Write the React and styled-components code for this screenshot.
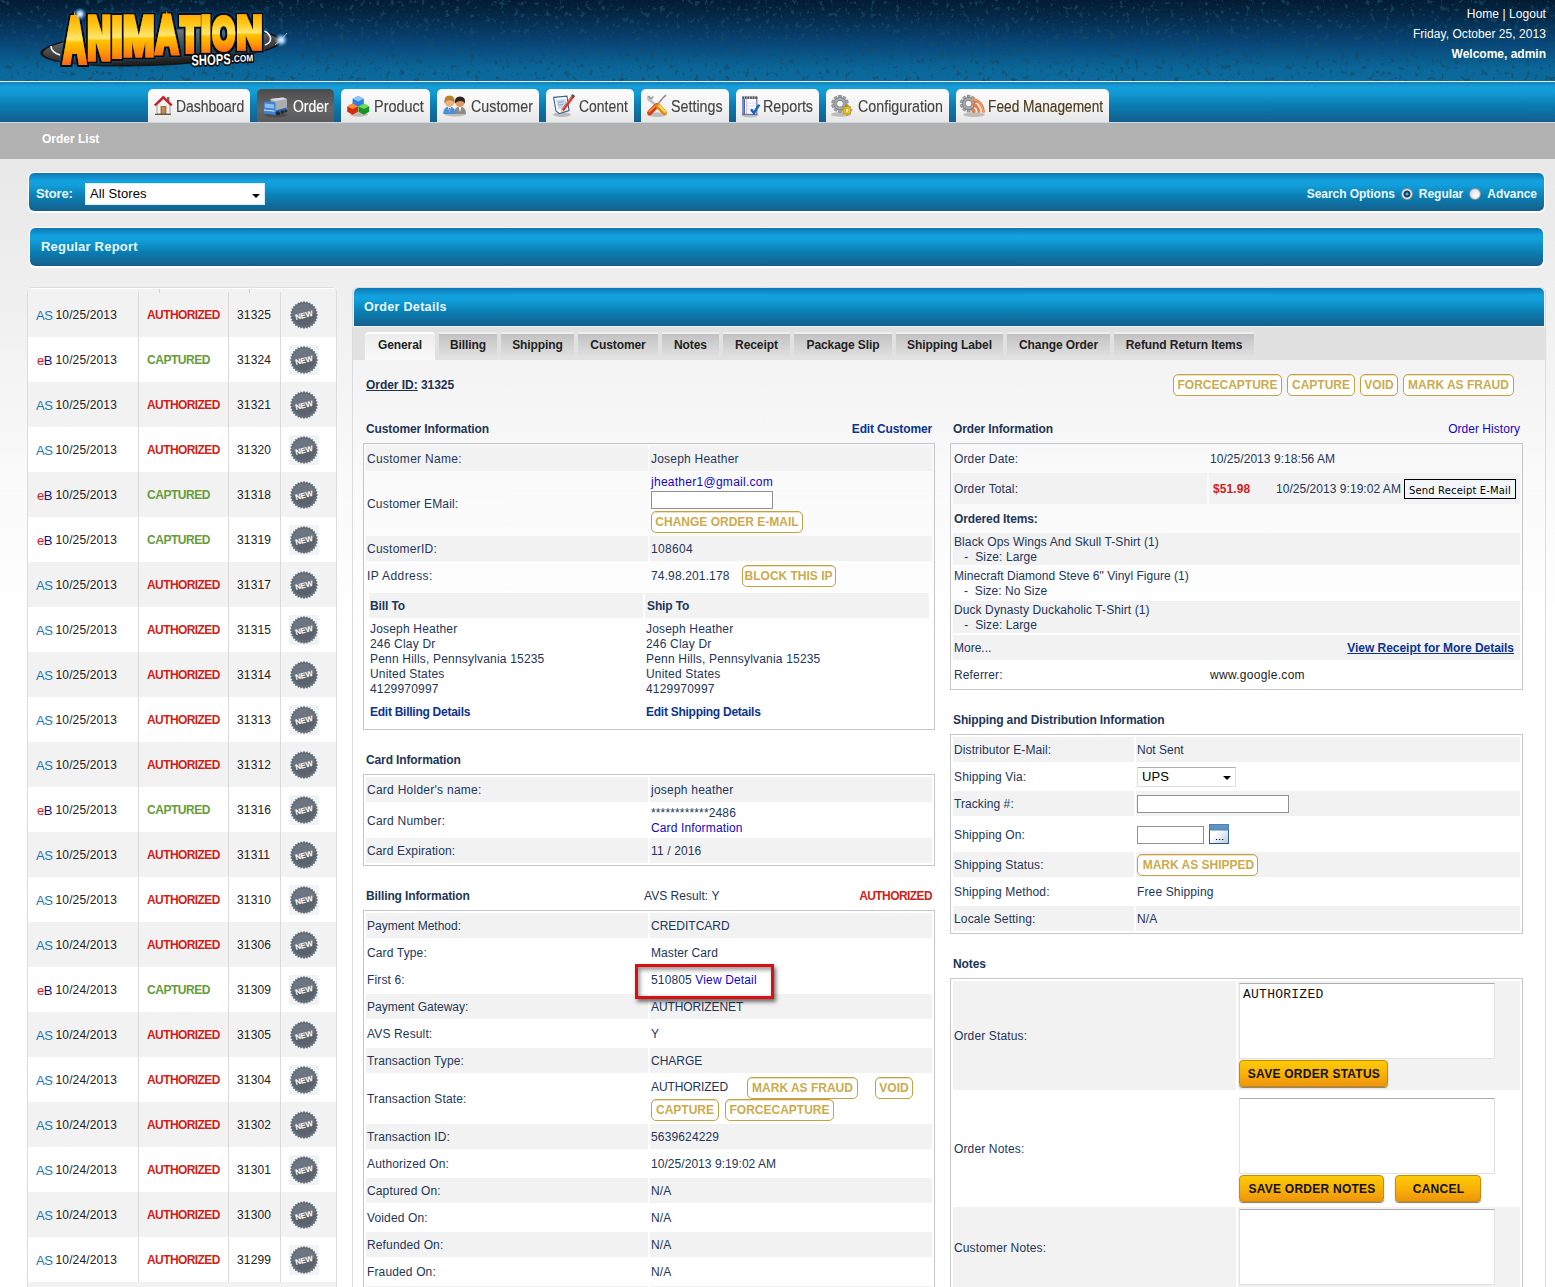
import React from "react";
import styled, { createGlobalStyle } from "styled-components";

const sans = `"Liberation Sans", Arial, Helvetica, sans-serif`;
const blueBar = `linear-gradient(#0d77b3 0%, #13a1de 20%, #12a0dc 30%, #0a7fb3 62%, #155f8c 100%)`;

const GlobalStyle = createGlobalStyle`
  body { margin: 0; background: #fff; }
  * { box-sizing: border-box; }
  b { letter-spacing: -0.12px; }
`;

const Page = styled.div`
  width: 1555px;
  height: 1287px;
  overflow: hidden;
  font: 12px/15px ${sans};
  letter-spacing: 0.14px;
  color: #22355a;
  background: linear-gradient(#e8e8e8 159px, #efefef 290px, #fafafa 480px, #fff 640px);
`;

/* ---------- header ---------- */
const Header = styled.header`
  position: relative;
  height: 81px;
  display: flex;
  justify-content: space-between;
  background: linear-gradient(#031b31 0%, #052a4a 22%, #08487a 55%, #0a6799 85%, #0b6b9e 100%);
`;
const Grunge = styled.svg`
  position: absolute;
  inset: 0;
`;
const LogoBox = styled.div`
  position: relative;
  padding-left: 36px;
  svg { display: block; }
`;
const UserInfo = styled.div`
  position: relative;
  padding: 4px 9px 0 0;
  text-align: right;
  line-height: 20px;
  letter-spacing: 0.05px;
  color: #fff;
  b { letter-spacing: 0; }
`;

const NavBar = styled.nav`
  height: 42px;
  border-top: 1px solid #e3f0f7;
  border-bottom: 1px solid #c9d8e0;
  padding: 7px 0 0 148px;
  display: flex;
  gap: 7px;
  background: linear-gradient(#1a7fb4 0, #149fda 5px, #129ad4 11px, #0a7bb0 24px, #135f8c 40px);
`;
const Tab = styled.a`
  width: ${(p) => p.$w}px;
  height: 33px;
  padding-left: ${(p) => p.$pad}px;
  display: flex;
  align-items: center;
  border-radius: 5px 5px 0 0;
  color: ${(p) => (p.$active ? "#fff" : p.$brown ? "#4a3a1c" : "#444")};
  background: ${(p) => (p.$active ? "linear-gradient(#4b4b4b, #666 60%, #5a5a5a)" : "linear-gradient(#fcfcfc, #f2f2f2 60%, #e6e6e6)")};
`;
const TabIcon = styled.span`
  flex: none;
  width: ${(p) => p.$w}px;
  height: 24px;
  svg { display: block; overflow: visible; }
`;
const TabLabel = styled.span`
  font-size: 17px;
  line-height: 20px;
  letter-spacing: 0;
  white-space: nowrap;
  transform: scaleX(${(p) => p.$scale});
  transform-origin: 0 50%;
  padding-top: 2px;
  -webkit-text-stroke: 0.15px currentColor;
`;

const SubNav = styled.div`
  height: 36px;
  background: #b2b2b2;
  color: #fff;
  font-weight: bold;
  letter-spacing: 0;
  padding: 9px 0 0 42px;
`;

/* ---------- bars ---------- */
const Bar = styled.div`
  height: 40px;
  margin: ${(p) => p.$margin};
  padding: ${(p) => p.$pad};
  border: 1px solid #fff;
  box-shadow: 0 1px 0 #fff;
  border-radius: 6px;
  background: ${blueBar};
  background-clip: padding-box;
  color: #e8f8ff;
  font-weight: bold;
  font-size: ${(p) => p.$size || 12}px;
  letter-spacing: ${(p) => p.$ls || 0}px;
  display: flex;
  align-items: center;
`;
const Spacer = styled.span`
  flex: 1;
`;
const Select = styled.div`
  width: ${(p) => p.$w}px;
  height: ${(p) => p.$h}px;
  border: 1px solid #dcdfe4;
  border-top-color: #abadb3;
  border-color: ${(p) => (p.$plain ? "#d8ecf8" : "")};
  background: #fff;
  color: #000;
  font: 13px/15px ${sans};
  letter-spacing: 0.1px;
  padding: 0 4px 1px 4px;
  display: flex;
  align-items: center;
  justify-content: space-between;
  &::after {
    content: "";
    border: 4px solid transparent;
    border-top-color: #000;
    border-bottom: 0;
    margin-top: 4px;
  }
`;
const StoreLabel = styled.span`
  width: 49px;
  margin-top: -2px;
  font-size: 13px;
  letter-spacing: -0.15px;
`;
const Radio = styled.span`
  width: 12px;
  height: 12px;
  margin: 0 6px 0;
  border-radius: 50%;
  border: 1px solid #8c9299;
  background: ${(p) => (p.$on ? "radial-gradient(circle, #49b2e0 0 1px, #123c5e 2px 3px, #eee 4px)" : "radial-gradient(circle at 60% 60%, #fff, #cfcfcf)")};
`;

/* ---------- main ---------- */
const Main = styled.main`
  display: flex;
  align-items: flex-start;
  padding: 20px 0 0 27px;
`;
const OrderList = styled.div`
  width: 310px;
  height: 1010px;
  border: 1px solid #dcdcdc;
  border-radius: 6px 6px 0 0;
  background: #f2f2f2;
`;
const ListTop = styled.div`
  height: 4px;
  display: flex;
  gap: 89px;
  padding-left: 131px;
  border-radius: 6px 6px 0 0;
  border-top: 1px solid #fff;
  span { width: 1px; height: 4px; background: #cfcfcf; }
`;
const ListRow = styled.div`
  height: 45px;
  display: grid;
  grid-template-columns: 111px 90px 52px 1fr;
  background: ${(p) => (p.$alt ? "#fff" : "#f2f2f2")};
`;
const ListCell = styled.div`
  display: flex;
  align-items: center;
  padding: 2px 0 0 8px;
  color: #222;
  border-right: 1px solid #dadada;
  &:last-child { border-right: 0; padding-top: 0; }
`;
const Source = styled.span`
  width: 19.5px;
  font-size: 13px;
  padding-left: ${(p) => (p.$eb ? 1 : 0)}px;
  letter-spacing: -0.5px;
  color: ${(p) => (p.$eb ? "#140c8c" : "#1b78b5")};
  i { font-style: normal; color: #d8141c; }
`;
const Status = styled.b`
  letter-spacing: ${(p) => (p.$ok ? -0.45 : -0.58)}px;
  color: ${(p) => (p.$ok ? "#669c3c" : "#cf1f18")};
`;

const Panel = styled.section`
  width: 1194px;
  height: 1010px;
  margin-left: 15px;
  border: 1px solid #dcdcdc;
  border-radius: 6px 6px 0 0;
`;
const PanelHead = styled.h2`
  margin: 0 1px 1px;
  height: 38px;
  padding: 0 10px;
  border-radius: 5px 5px 0 0;
  background: ${blueBar};
  color: #e8f8ff;
  font: bold 12.6px/39px ${sans};
  letter-spacing: 0.28px;
`;
const PanelTabs = styled.div`
  height: 33px;
  background: #e1e1e1;
  display: flex;
  gap: 4px;
  padding: 5px 0 0 12px;
`;
const PanelTab = styled.span`
  width: ${(p) => p.$w}px;
  height: ${(p) => (p.$active ? 28 : 25)}px;
  border-top: 2px solid ${(p) => (p.$active ? "#fff" : "#efefef")};
  border-radius: ${(p) => (p.$active ? "4px 4px 0 0" : "0")};
  background: ${(p) => (p.$active ? "linear-gradient(#ececec, #f9f9f9)" : "linear-gradient(#c2c2c2, #e0e0e0)")};
  text-align: center;
  font-weight: bold;
  letter-spacing: -0.08px;
  line-height: 22px;
  color: #222;
  white-space: nowrap;
`;
const Toolbar = styled.div`
  height: 56px;
  display: flex;
  gap: 5px;
  padding: 14px 31px 0 13px;
  b { padding-top: 4px; color: #1d3152; letter-spacing: -0.04px; }
`;
const Columns = styled.div`
  display: flex;
  gap: 15px;
  padding-left: 10px;
`;
const Col = styled.div`
  width: ${(p) => p.$w}px;
`;
const Title = styled.div`
  display: flex;
  justify-content: space-between;
  height: 27px;
  padding: 6px 3px 0;
  margin-top: ${(p) => p.$mt || 0}px;
  letter-spacing: 0.04px;
  color: #1d3557;
`;
const TitleName = styled.b`
  width: 278px;
`;
const Box = styled.div`
  border: 1px solid #c4c7ca;
  padding: 2px;
  display: flex;
  flex-direction: column;
  gap: 2px;
`;
const Row = styled.div`
  display: grid;
  grid-template-columns: ${(p) => p.$cols};
  gap: 2px;
  height: ${(p) => p.$h || 25}px;
`;
const Cell = styled.div`
  position: relative;
  display: flex;
  align-items: ${(p) => (p.$top ? "flex-start" : "center")};
  flex-wrap: ${(p) => (p.$wrap ? "wrap" : "nowrap")};
  align-content: center;
  padding-top: ${(p) => (p.$pt === undefined ? 2 : p.$pt)}px;
  padding-left: ${(p) => (p.$pl === undefined ? 1 : p.$pl)}px;
  letter-spacing: ${(p) => (p.$ls === undefined ? "inherit" : `${p.$ls}px`)};
  white-space: pre;
  background: ${(p) => (p.$shade ? "#f2f2f2" : "transparent")};
`;
const Stack = styled.div`
  display: flex;
  flex-direction: column;
  align-items: flex-start;
  gap: ${(p) => p.$gap || 0}px;
`;
const EmailLine = styled.div`
  height: 15px;
  line-height: 17px;
  letter-spacing: 0.27px;
`;
const Inner = styled.div`
  padding: 3px 3px 0 3px;
  height: 137px;
`;
const Address = styled.div`
  padding: 4px 0 0 1px;
  letter-spacing: 0.19px;
  white-space: pre-line;
`;
const Link = styled.a`
  color: ${(p) => (p.$bold ? "#0b3390" : "#1405c6")};
  font-weight: ${(p) => (p.$bold ? "bold" : "normal")};
  letter-spacing: ${(p) => (p.$bold ? "-0.14px" : "inherit")};
  text-decoration: ${(p) => (p.$line ? "underline" : "none")};
`;
const EditLink = styled(Link)`
  display: block;
  margin-top: 8px;
  letter-spacing: -0.26px;
`;
const ReceiptLink = styled(Link)`
  margin-right: 6px;
  letter-spacing: -0.04px;
`;
const Outline = styled.button`
  flex: none;
  width: ${(p) => p.$w}px;
  height: 22px;
  margin: ${(p) => p.$m || "0"};
  padding: 0;
  border: 1px solid #c4a144;
  border-radius: 5px;
  background: #fff;
  box-shadow: inset 0 1px 0 #ece0bd;
  color: #cbab4d;
  font: bold 12px/20px ${sans};
  letter-spacing: 0;
  text-indent: ${(p) => p.$indent || 0}px;
  white-space: nowrap;
`;
const Gold = styled.button`
  width: ${(p) => p.$w}px;
  height: 27px;
  padding: 0;
  border: 1px solid #c98a08;
  border-radius: 4px;
  background: linear-gradient(#fdcb06, #f9b208 50%, #ee950c);
  box-shadow: 0 1px 1px #8a7a66;
  color: #111;
  font: bold 12px/26px ${sans};
  letter-spacing: 0.25px;
  text-indent: 1px;
  white-space: nowrap;
`;
const GoldRow = styled.div`
  display: flex;
  gap: 11px;
`;
const Input = styled.input`
  width: ${(p) => p.$w}px;
  height: 18px;
  border: 1px solid #8f9396;
  padding: 0 2px;
  background: #fff;
`;
const Area = styled.textarea`
  display: block;
  width: 256px;
  height: 76px;
  resize: none;
  border: 1px solid #dfe1e6;
  border-top-color: #abadb3;
  padding: 3px 3px;
  font: 13px/15px "Liberation Mono", monospace;
  letter-spacing: 0.25px;
  color: #111;
  background: #fff;
`;
const SendButton = styled.button`
  width: 112px;
  height: 20px;
  margin: -2px 0 0 3px;
  padding: 0;
  border: 1px solid #000;
  background: #f2f6fb;
  color: #000;
  font: 10px/21px "DejaVu Sans", Verdana, sans-serif;
  letter-spacing: 0.15px;
  white-space: nowrap;
`;
const Money = styled.b`
  width: 63px;
  letter-spacing: 0.1px;
  color: #cf1f18;
`;
const Stamp = styled.span`
  width: 125px;
  letter-spacing: 0.04px;
`;
const Highlight = styled.div`
  position: absolute;
  z-index: 1;
  left: -15px;
  top: -3px;
  width: 139px;
  height: 35px;
  border: 3px solid #d90f12;
  box-shadow: 2px 3px 4px rgba(0, 0, 0, 0.55), inset 2px 3px 4px rgba(0, 0, 0, 0.4);
`;
const Dark = styled.span`
  color: #222;
  letter-spacing: 0.3px;
`;
const Drawing = styled.svg`
  display: block;
  flex: none;
  margin: ${(p) => p.$m || 0};
`;

/* ---------- drawings ---------- */
const letters = [
  // glyph, left, right, bottom, side bearing, ink width, stroke
  ["A", 62, 87, 64.5, 0, 72, 13],
  ["N", 88, 110, 61.5, 7, 58, 12],
  ["I", 112.5, 121.7, 59, 7, 14, 3],
  ["M", 124, 153.5, 57.5, 7, 69, 9],
  ["A", 154, 179.5, 55.5, 0, 72, 13],
  ["T", 179.5, 200.5, 54, 2, 57, 13],
  ["I", 201.8, 210.2, 53, 7, 14, 3],
  ["O", 212, 235, 51.5, 4, 69, 13],
  ["N", 237, 261.5, 50.5, 7, 58, 12],
];

function Logo() {
  return (
    <svg width="270" height="80" viewBox="36 0 270 80" role="img" aria-label="Animation Shops.com">
      <defs>
        <linearGradient id="gold" gradientUnits="userSpaceOnUse" x1="0" y1="-75" x2="0" y2="6">
          <stop offset="0" stopColor="#ffae00" />
          <stop offset="0.25" stopColor="#ffc91a" />
          <stop offset="0.5" stopColor="#ffe672" />
          <stop offset="0.55" stopColor="#ffc400" />
          <stop offset="0.78" stopColor="#ff9d05" />
          <stop offset="1" stopColor="#fb6a12" />
        </linearGradient>
        <linearGradient id="disc" x1="0" y1="0" x2="0" y2="1">
          <stop offset="0" stopColor="#7a7a7a" />
          <stop offset="0.5" stopColor="#454545" />
          <stop offset="1" stopColor="#1c1c1c" />
        </linearGradient>
        <radialGradient id="spark">
          <stop offset="0" stopColor="#fff" />
          <stop offset="0.35" stopColor="#b9dcff" stopOpacity="0.9" />
          <stop offset="1" stopColor="#5aa8ec" stopOpacity="0" />
        </radialGradient>
        <filter id="outline" x="-10%" y="-20%" width="120%" height="140%">
          <feMorphology in="SourceAlpha" operator="dilate" radius="2" result="fat" />
          <feFlood floodColor="#0b0b0b" />
          <feComposite in2="fat" operator="in" result="edge" />
          <feGaussianBlur in="fat" stdDeviation="1.3" result="soft" />
          <feFlood floodColor="#1467a8" />
          <feComposite in2="soft" operator="in" result="halo" />
          <feMerge>
            <feMergeNode in="halo" />
            <feMergeNode in="edge" />
            <feMergeNode in="SourceGraphic" />
          </feMerge>
        </filter>
      </defs>
      <ellipse cx="161" cy="47" rx="121" ry="18.5" fill="#141414" transform="rotate(-3 161 47)" />
      <ellipse cx="161" cy="47" rx="118" ry="17" fill="url(#disc)" transform="rotate(-3 161 47)" />
      <path d="M51 46 C51 50 54 53 60 55" stroke="#fff" strokeWidth="1.6" fill="none" />
      <g filter="url(#outline)">
        {letters.map(([g, l, r, b, lsb, ink, sw], i) => {
          const sx = (r - l) / (ink + sw);
          const sy = (b - 15) / (68.8 + sw);
          return (
            <text
              key={i}
              transform={`translate(${l - (lsb - sw / 2) * sx} ${b - (sw / 2) * sy}) scale(${sx} ${sy})`}
              fontFamily="Liberation Sans"
              fontWeight="bold"
              fontSize="100"
              fill="url(#gold)"
              stroke="url(#gold)"
              strokeWidth={sw}
            >
              {g}
            </text>
          );
        })}
      </g>
      <path d="M264.5 31 C272 35 273 42 265 45" stroke="#fff" strokeWidth="1.5" fill="none" />
      <g fontFamily="Liberation Sans" fontWeight="bold" fill="#fff" stroke="#0c0c0c" strokeWidth="3.4" paintOrder="stroke" strokeLinejoin="round">
        <text x="191.5" y="65.5" fontSize="15" textLength="39.5" lengthAdjust="spacingAndGlyphs" transform="rotate(-2 191 65)">SHOPS</text>
        <text x="231.5" y="62" fontSize="9.5" textLength="22" lengthAdjust="spacingAndGlyphs" transform="rotate(-2 231 62)">.COM</text>
      </g>
      <circle cx="80" cy="14" r="6.5" fill="url(#spark)" />
      <circle cx="281" cy="40" r="7" fill="url(#spark)" />
      <path d="M281 40 L287 33 M281 40 L275 45" stroke="#bfe0ff" strokeWidth="0.8" />
    </svg>
  );
}

function Texture() {
  return (
    <Grunge width="1555" height="81">
      <defs>
        <filter id="grit" x="0" y="0" width="100%" height="100%">
          <feTurbulence type="fractalNoise" baseFrequency="0.2 0.17" numOctaves="4" seed="8" />
          <feColorMatrix values="0 0 0 0 0.01  0 0 0 0 0.07  0 0 0 0 0.13  11 0 0 0 -6.9" />
        </filter>
        <filter id="grain" x="0" y="0" width="100%" height="100%">
          <feTurbulence type="fractalNoise" baseFrequency="0.5" numOctaves="2" seed="3" />
          <feColorMatrix values="0 0 0 0 0.01  0 0 0 0 0.1  0 0 0 0 0.2  0 3 0 0 -1.6" />
        </filter>
      </defs>
      <rect width="1555" height="81" filter="url(#grit)" opacity="0.65" />
      <rect width="1555" height="81" filter="url(#grain)" opacity="0.2" />
    </Grunge>
  );
}

const teeth = (cx, cy, n, ro, ri) =>
  Array.from({ length: n * 2 }, (_, i) => {
    const a = (Math.PI * i) / n;
    const r = i % 2 ? ri : ro;
    return `${(cx + r * Math.cos(a)).toFixed(2)},${(cy + r * Math.sin(a)).toFixed(2)}`;
  }).join(" ");

function NewBadge() {
  return (
    <Drawing width="30" height="30" viewBox="0 0 30 30">
      <rect width="30" height="30" fill="#f0f3f5" />
      <polygon points={teeth(15, 15, 28, 14.2, 12.4)} fill="#5f6872" />
      <circle cx="15" cy="15" r="11.6" fill="#6d7680" />
      <path d="M3.6 17 A11.6 11.6 0 0 0 26.4 13 L3.6 17Z" fill="#59626d" />
      <text x="15" y="17.9" textAnchor="middle" fontFamily="Liberation Sans" fontWeight="bold" fontSize="7.8" fill="#fff" textLength="18" transform="rotate(-14 15 15)">NEW</text>
    </Drawing>
  );
}

const Gear = ({ cx, cy, r, n, fill, edge }) => (
  <g>
    {Array.from({ length: n }, (_, i) => (
      <rect key={i} x={cx - r * 0.17} y={cy - r} width={r * 0.34} height={r * 0.5} fill={fill} stroke={edge} strokeWidth="0.5" transform={`rotate(${(360 / n) * i} ${cx} ${cy})`} />
    ))}
    <circle cx={cx} cy={cy} r={r * 0.56} fill="none" stroke={edge} strokeWidth={r * 0.42} />
    <circle cx={cx} cy={cy} r={r * 0.56} fill="none" stroke={fill} strokeWidth={r * 0.3} />
  </g>
);

const Shadow = ({ cx = 10, cy = 20, rx = 9 }) => <ellipse cx={cx} cy={cy} rx={rx} ry="2.4" fill="#000" opacity="0.2" />;

const icons = {
  home: (
    <>
      <path d="M3 11 L9.5 5 L16 11 V20 H3Z" fill="#f4f1ec" stroke="#8b8b8b" strokeWidth="0.8" />
      <rect x="13" y="3" width="2.4" height="5" fill="#7a6a62" />
      <path d="M0.8 11.5 L9.3 3.2 L17.8 11.5" fill="none" stroke="#c8202b" strokeWidth="2.4" />
      <rect x="7" y="12.5" width="5" height="7.5" fill="#c98650" stroke="#7a5130" strokeWidth="0.7" />
      <path d="M1 20.4 H17" stroke="#55603f" strokeWidth="1.2" />
    </>
  ),
  truck: (
    <>
      <Shadow cx={13} cy={21} rx={11} />
      <path d="M7 5 L20 3.5 L24 5 V15 L12 18Z" fill="#a9adb0" />
      <path d="M7 5 L20 3.5 L24 5 L12 7Z" fill="#d9dcde" />
      <path d="M1 9 Q1 7.4 3 7.4 L11.5 8 Q12.5 8 12.5 9.5 V21 L2 19.5 Q0.6 19 0.6 17Z" fill="#3f83d6" />
      <path d="M1.8 9.6 L11 10.4 V14.4 L1.8 13.4Z" fill="#8fbdec" />
      <path d="M1 16 L11.5 17.2" stroke="#dcebfa" strokeWidth="1" />
      <path d="M12.5 16.5 L23.5 13.5 V17 L12.5 20.6Z" fill="#2e66b4" />
      <circle cx="15" cy="19.4" r="2.1" fill="#23272e" />
      <circle cx="19.4" cy="18" r="1.8" fill="#23272e" />
      <circle cx="22.8" cy="17" r="1.5" fill="#23272e" />
    </>
  ),
  product: (
    <>
      <Shadow cx={12} cy={20.4} rx={9} />
      <polygon points="11.2,2 16.8,4.8 16.8,9.8 11.2,12.8 5.6,9.8 5.6,4.8" fill="#2f7fe0" />
      <polygon points="11.2,2 16.8,4.8 11.2,7.4 5.6,4.8" fill="#8cc8ff" />
      <polygon points="5.6,9.6 11,12.4 11,17.8 5.6,20.8 0.2,17.8 0.2,12.4" fill="#d92a0c" />
      <polygon points="5.6,9.6 11,12.4 5.6,15 0.2,12.4" fill="#ff9040" />
      <polygon points="16.8,9.6 22.2,12.4 22.2,17.8 16.8,20.8 11.4,17.8 11.4,12.4" fill="#149427" />
      <polygon points="16.8,9.6 22.2,12.4 16.8,15 11.4,12.4" fill="#6edc55" />
    </>
  ),
  people: (
    <>
      <Shadow cx={12} cy={20} rx={11} />
      <path d="M11 20 Q11 12.5 17 12.5 Q23 12.5 23 20Z" fill="#8c8c8c" />
      <path d="M15.6 13 L17 18 L18.4 13Z" fill="#fff" />
      <circle cx="17" cy="8.6" r="4.6" fill="#d99a66" />
      <path d="M12 9.6 Q11 2.4 17 2.4 Q23 2.4 22 9.4 Q20.4 6.8 17 7 Q13.6 7 12 9.6Z" fill="#2b2624" />
      <path d="M0.2 20 Q0.2 12.5 6.4 12.5 Q12.4 12.5 12.4 20Z" fill="#4b90d8" />
      <path d="M5 13 L6.4 18 L8 13Z" fill="#fff" />
      <path d="M6 14 L6.5 18 L7.1 14Z" fill="#c43030" />
      <circle cx="6.5" cy="8" r="4.8" fill="#ecb27c" />
      <path d="M1.4 9.6 Q0.6 1.4 6.5 1.4 Q12.4 1.4 11.6 9.4 Q9.8 5.8 6.5 6.2 Q2.8 6.4 1.4 9.6Z" fill="#b9822f" />
    </>
  ),
  pencil: (
    <>
      <Shadow cx={9} cy={20.6} rx={9} />
      <path d="M0.6 3.4 L14 2.2 L16 16.6 L6.4 19.6 L3 17Z" fill="#fff" stroke="#3c6094" strokeWidth="1.1" />
      <path d="M3 6 L12.6 5 L13.8 14 L5.4 15.6Z" fill="#c3d9f0" />
      <path d="M5 8.4 L11 7.6 M5.4 11 L10 10.4" stroke="#7e9cc4" strokeWidth="0.8" />
      <path d="M20.4 1.6 L9.6 16.4" stroke="#cf3a26" strokeWidth="3.2" />
      <path d="M19.4 1.6 L9 15.8" stroke="#f0806a" strokeWidth="1" />
      <path d="M10.6 17.2 L8.2 15.4 L7.6 19Z" fill="#ecc48a" />
      <path d="M20.8 1 L19.4 3" stroke="#555" strokeWidth="3.2" />
    </>
  ),
  tools: (
    <>
      <Shadow cx={10} cy={20.6} rx={10} />
      <path d="M1.6 2 Q0.4 6.2 4.4 7.2 L12.4 15.4" stroke="#b9bec2" strokeWidth="2.6" fill="none" />
      <path d="M1.6 2 L4 5 L6.4 2.6" stroke="#8b9196" strokeWidth="1.4" fill="none" />
      <path d="M19 1.2 L16.2 3.6 L9.4 12" stroke="#8b9196" strokeWidth="1.6" fill="none" />
      <path d="M9.8 11.6 L2.6 18.8" stroke="#d23a14" strokeWidth="5" strokeLinecap="round" />
      <path d="M9.2 11 L2.2 17.8" stroke="#ff9b3a" strokeWidth="1.6" strokeLinecap="round" />
      <path d="M11 12 L17.4 18.6" stroke="#e28a10" strokeWidth="5" strokeLinecap="round" />
      <path d="M12 11.8 L18 17.8" stroke="#ffe05c" strokeWidth="2" strokeLinecap="round" />
    </>
  ),
  report: (
    <>
      <Shadow cx={8} cy={21} rx={8.6} />
      <rect x="0.8" y="3.4" width="14" height="17" fill="#fafcff" stroke="#5a6fa6" strokeWidth="1.1" />
      <rect x="0.4" y="2.4" width="14.8" height="2.6" fill="#4b4f57" />
      <path d="M2.4 1.6V5 M5 1.6V5 M7.6 1.6V5 M10.2 1.6V5 M12.8 1.6V5" stroke="#c5cad2" strokeWidth="0.9" />
      <path d="M2.2 5V20.4" stroke="#3566c8" strokeWidth="1.6" />
      <path d="M4.8 5V20.4" stroke="#e08a8a" strokeWidth="0.7" />
      <path d="M6 9H13.6 M6 12H13.6 M6 15H13.6" stroke="#c2cfe4" strokeWidth="0.7" />
      <path d="M9 15.4 L12 19 L17.2 10.6" fill="none" stroke="#1f62bd" strokeWidth="2.5" />
    </>
  ),
  gears: (
    <>
      <Shadow cx={10} cy={20.4} rx={10} />
      <Gear cx={9} cy={9.8} r={8.4} n={10} fill="#a5a8ac" edge="#686b70" />
      <Gear cx={16} cy={16.2} r={5} n={8} fill="#efc51e" edge="#a98008" />
    </>
  ),
  feed: (
    <>
      <Shadow cx={14} cy={20.6} rx={11} />
      <Gear cx={8.6} cy={9.6} r={8.4} n={10} fill="#a5a8ac" edge="#686b70" />
      <g fill="none" stroke="#ee7a3c" strokeWidth="2.7">
        <path d="M11.4 5.4 Q22.6 6.4 23.6 18.6" />
        <path d="M11.8 10 Q18.4 11 19 18.6" />
      </g>
      <path d="M11.4 5.4 Q22.6 6.4 23.6 18.6" fill="none" stroke="#f9b58a" strokeWidth="0.8" />
      <circle cx="13.6" cy="17" r="2.1" fill="#ee7a3c" />
    </>
  ),
};

const CalendarIcon = () => (
  <Drawing width="20" height="20" viewBox="0 0 20 20" $m="-1px 0 0 5px">
    <defs>
      <linearGradient id="calBody" x1="0" y1="0" x2="1" y2="1">
        <stop offset="0.4" stopColor="#fff" />
        <stop offset="1" stopColor="#b9c8da" />
      </linearGradient>
    </defs>
    <rect x="0.5" y="0.5" width="19" height="19" fill="url(#calBody)" stroke="#2f6496" />
    <rect x="0.5" y="0.5" width="19" height="5.5" fill="#5f95c6" stroke="#4a82b6" />
    <path d="M0 19.5H20" stroke="#22517f" />
    <path d="M7 15.5h1.2M10 15.5h1.2M13 15.5h1.2" stroke="#111" strokeWidth="1.2" />
  </Drawing>
);

/* ---------- data ---------- */
const nav = [
  // label, icon, tab width, left padding, icon slot, label scale
  ["Dashboard", "home", 102, 6, 22, 0.82],
  ["Order", "truck", 77, 6, 30, 0.82],
  ["Product", "product", 89, 6, 27, 0.85],
  ["Customer", "people", 102, 6, 28, 0.84],
  ["Content", "pencil", 88, 7, 26, 0.82],
  ["Settings", "tools", 88, 6, 24, 0.84],
  ["Reports", "report", 83, 6, 21, 0.84],
  ["Configuration", "gears", 123, 5, 27, 0.84],
  ["Feed Management", "feed", 153, 4, 28, 0.807],
];

const orders = [
  ["AS", "10/25/2013", 31325], ["eB", "10/25/2013", 31324], ["AS", "10/25/2013", 31321],
  ["AS", "10/25/2013", 31320], ["eB", "10/25/2013", 31318], ["eB", "10/25/2013", 31319],
  ["AS", "10/25/2013", 31317], ["AS", "10/25/2013", 31315], ["AS", "10/25/2013", 31314],
  ["AS", "10/25/2013", 31313], ["AS", "10/25/2013", 31312], ["eB", "10/25/2013", 31316],
  ["AS", "10/25/2013", 31311], ["AS", "10/25/2013", 31310], ["AS", "10/24/2013", 31306],
  ["eB", "10/24/2013", 31309], ["AS", "10/24/2013", 31305], ["AS", "10/24/2013", 31304],
  ["AS", "10/24/2013", 31302], ["AS", "10/24/2013", 31301], ["AS", "10/24/2013", 31300],
  ["AS", "10/24/2013", 31299],
];

const detailTabs = [
  ["General", 70], ["Billing", 58], ["Shipping", 73], ["Customer", 80], ["Notes", 57],
  ["Receipt", 67], ["Package Slip", 98], ["Shipping Label", 107], ["Change Order", 103],
  ["Refund Return Items", 140],
];

const L = "282px 282px";
const R1 = "254px 311px";
const R2 = "181px 384px";
const R3 = "283px 282px";

function Field({ label, cols, h, shade, children, wrap, pl, pt, top, ls, vls }) {
  return (
    <Row $cols={cols} $h={h}>
      <Cell $shade={shade} $ls={ls}>{label}</Cell>
      <Cell $shade={shade} $wrap={wrap} $pl={pl} $pt={pt} $top={top} $ls={vls}>{children}</Cell>
    </Row>
  );
}

const addressText = `Joseph Heather
246 Clay Dr
Penn Hills, Pennsylvania 15235
United States
4129970997`;

export default function App() {
  return (
    <Page>
      <GlobalStyle />
      <Header>
        <Texture />
        <LogoBox><Logo /></LogoBox>
        <UserInfo>
          <div>Home | Logout</div>
          <div>Friday, October 25, 2013</div>
          <b>Welcome, admin</b>
        </UserInfo>
      </Header>
      <NavBar>
        {nav.map(([name, icon, w, pad, slot, scale]) => (
          <Tab key={name} $w={w} $pad={pad} $active={name === "Order"} $brown={icon === "feed"}>
            <TabIcon $w={slot}>
              <svg width="24" height="24" viewBox="0 0 24 24">{icons[icon]}</svg>
            </TabIcon>
            <TabLabel $scale={scale}>{name}</TabLabel>
          </Tab>
        ))}
      </NavBar>
      <SubNav>Order List</SubNav>

      <Bar $margin="13px 10px 0 28px" $pad="4px 7px 0 7px" $ls={-0.04}>
        <StoreLabel>Store:</StoreLabel>
        <Select $w={180} $h={22} $plain>All Stores</Select>
        <Spacer />
        Search Options<Radio $on />Regular<Radio />Advance
      </Bar>
      <Bar $margin="15px 11px 0 29px" $pad="0 11px 2px" $size={13} $ls={0.2}>Regular Report</Bar>

      <Main>
        <OrderList>
          <ListTop><span /><span /></ListTop>
          {orders.map(([src, date, id], i) => (
            <ListRow key={id} $alt={i % 2 === 1}>
              <ListCell>
                {src === "eB" ? <Source $eb><i>e</i>B</Source> : <Source>AS</Source>}
                {date}
              </ListCell>
              <ListCell>
                <Status $ok={src === "eB"}>{src === "eB" ? "CAPTURED" : "AUTHORIZED"}</Status>
              </ListCell>
              <ListCell>{id}</ListCell>
              <ListCell><NewBadge /></ListCell>
            </ListRow>
          ))}
        </OrderList>

        <Panel>
          <PanelHead>Order Details</PanelHead>
          <PanelTabs>
            {detailTabs.map(([name, w], i) => (
              <PanelTab key={name} $w={w} $active={i === 0}>{name}</PanelTab>
            ))}
          </PanelTabs>
          <Toolbar>
            <b><u>Order ID:</u> 31325</b>
            <Spacer />
            <Outline $w={109}>FORCECAPTURE</Outline>
            <Outline $w={68}>CAPTURE</Outline>
            <Outline $w={38}>VOID</Outline>
            <Outline $w={111}>MARK AS FRAUD</Outline>
          </Toolbar>

          <Columns>
            <Col $w={572}>
              <Title><b>Customer Information</b><Link $bold>Edit Customer</Link></Title>
              <Box>
                <Field cols={L} shade label="Customer Name:" ls={0.3} vls={0.22}>Joseph Heather</Field>
                <Field cols={L} h={61} label="Customer EMail:" ls={0.18} pt={0}>
                  <Stack $gap={2}>
                    <EmailLine><Link>jheather1@gmail.com</Link></EmailLine>
                    <Input $w={122} />
                    <Outline $w={152}>CHANGE ORDER E-MAIL</Outline>
                  </Stack>
                </Field>
                <Field cols={L} shade label="CustomerID:" ls={0.25} vls={0.33}>108604</Field>
                <Field cols={L} label="IP Address:" ls={0.42}>
                  74.98.201.178<Outline $w={94} $m="-2px 0 0 12px">BLOCK THIS IP</Outline>
                </Field>
                <Inner>
                  <Row $cols="274px 284px">
                    <Cell $shade><b>Bill To</b></Cell>
                    <Cell $shade $pl={2}><b>Ship To</b></Cell>
                  </Row>
                  <Row $cols="274px 284px" $h={100}>
                    <Address>
                      {addressText}
                      <EditLink $bold>Edit Billing Details</EditLink>
                    </Address>
                    <Address>
                      {addressText}
                      <EditLink $bold>Edit Shipping Details</EditLink>
                    </Address>
                  </Row>
                </Inner>
              </Box>

              <Title $mt={17}><b>Card Information</b></Title>
              <Box>
                <Field cols={L} shade label="Card Holder's name:" ls={0.26} vls={0.22}>joseph heather</Field>
                <Field cols={L} h={32} label="Card Number:" ls={0.24}>
                  <Stack><span>************2486</span><Link>Card Information</Link></Stack>
                </Field>
                <Field cols={L} shade label="Card Expiration:">11 / 2016</Field>
              </Box>

              <Title $mt={17}><TitleName>Billing Information</TitleName><span>AVS Result: Y</span><Spacer /><Status>AUTHORIZED</Status></Title>
              <Box>
                <Field cols={L} shade label="Payment Method:" ls={0} vls={0}>CREDITCARD</Field>
                <Field cols={L} label="Card Type:" vls={0.08}>Master Card</Field>
                <Field cols={L} label="First 6:">
                  510805 <Link>View Detail</Link>
                  <Highlight />
                </Field>
                <Field cols={L} shade label="Payment Gateway:" ls={0} vls={-0.1}>AUTHORIZENET</Field>
                <Field cols={L} label="AVS Result:">Y</Field>
                <Field cols={L} shade label="Transaction Type:" vls={0}>CHARGE</Field>
                <Field cols={L} h={47} label="Transaction State:" wrap vls={-0.1} pt={0}>
                  AUTHORIZED
                  <Outline $w={111} $m="0 17px 0 19px">MARK AS FRAUD</Outline>
                  <Outline $w={38} $m="1px 0 0">VOID</Outline>
                  <Outline $w={68} $m="0 6px 0 0">CAPTURE</Outline>
                  <Outline $w={109}>FORCECAPTURE</Outline>
                </Field>
                <Field cols={L} shade label="Transaction ID:">5639624229</Field>
                <Field cols={L} label="Authorized On:" vls={0.05}>10/25/2013 9:19:02 AM</Field>
                <Field cols={L} shade label="Captured On:">N/A</Field>
                <Field cols={L} label="Voided On:">N/A</Field>
                <Field cols={L} shade label="Refunded On:">N/A</Field>
                <Field cols={L} label="Frauded On:">N/A</Field>
                <Row $cols={L}><Cell $shade /><Cell $shade /></Row>
              </Box>
            </Col>

            <Col $w={573}>
              <Title><b>Order Information</b><Link>Order History</Link></Title>
              <Box>
                <Field cols={R1} label="Order Date:" vls={0.05}>10/25/2013 9:18:56 AM</Field>
                <Field cols={R1} h={31} shade label="Order Total:" pl={4}>
                  <Money>$51.98</Money><Stamp>10/25/2013 9:19:02 AM</Stamp><SendButton>Send Receipt E-Mail</SendButton>
                </Field>
                <Row $cols="1fr"><Cell><b>Ordered Items:</b></Cell></Row>
                <Row $cols="1fr" $h={32}><Cell $shade $ls={0.1}>{"Black Ops Wings And Skull T-Shirt (1)\n   -  Size: Large"}</Cell></Row>
                <Row $cols="1fr" $h={32}><Cell $ls={0.03}>{"Minecraft Diamond Steve 6\" Vinyl Figure (1)\n   -  Size: No Size"}</Cell></Row>
                <Row $cols="1fr" $h={32}><Cell $shade $ls={0.09}>{"Duck Dynasty Duckaholic T-Shirt (1)\n   -  Size: Large"}</Cell></Row>
                <Row $cols="1fr">
                  <Cell $shade $ls={0}>More...<Spacer /><ReceiptLink $bold $line>View Receipt for More Details</ReceiptLink></Cell>
                </Row>
                <Field cols={R1} label="Referrer:"><Dark>www.google.com</Dark></Field>
              </Box>

              <Title $mt={17}><b>Shipping and Distribution Information</b></Title>
              <Box>
                <Field cols={R2} shade label="Distributor E-Mail:" ls={0.1} vls={0}>Not Sent</Field>
                <Field cols={R2} label="Shipping Via:" pt={0}><Select $w={99} $h={20}>UPS</Select></Field>
                <Field cols={R2} shade label="Tracking #:" ls={0.08} pt={0}><Input $w={152} /></Field>
                <Field cols={R2} h={32} label="Shipping On:" pt={1}><Input $w={67} /><CalendarIcon /></Field>
                <Field cols={R2} shade label="Shipping Status:" pt={0}><Outline $w={121} $indent={2}>MARK AS SHIPPED</Outline></Field>
                <Field cols={R2} label="Shipping Method:">Free Shipping</Field>
                <Field cols={R2} shade label="Locale Setting:">N/A</Field>
              </Box>

              <Title $mt={17}><b>Notes</b></Title>
              <Box>
                <Field cols={R3} h={109} shade label="Order Status:" top>
                  <Stack $gap={1}>
                    <Area defaultValue="AUTHORIZED" />
                    <Gold $w={149}>SAVE ORDER STATUS</Gold>
                  </Stack>
                </Field>
                <Field cols={R3} h={113} label="Order Notes:" top pt={6}>
                  <Stack $gap={1}>
                    <Area />
                    <GoldRow>
                      <Gold $w={145}>SAVE ORDER NOTES</Gold>
                      <Gold $w={86}>CANCEL</Gold>
                    </GoldRow>
                  </Stack>
                </Field>
                <Field cols={R3} h={81} shade label="Customer Notes:" top>
                  <Area />
                </Field>
              </Box>
            </Col>
          </Columns>
        </Panel>
      </Main>
    </Page>
  );
}
